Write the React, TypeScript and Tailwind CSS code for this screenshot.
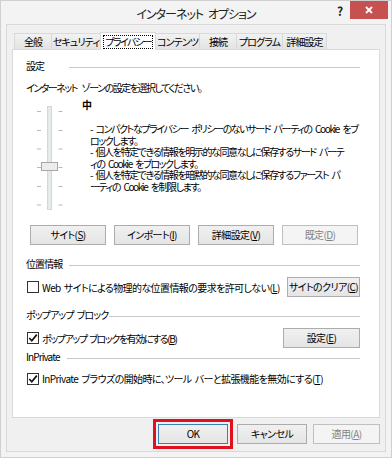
import React from 'react';

const FONT = "[font-family:'Noto_Sans_CJK_JP',sans-serif] [font-feature-settings:'palt'] [word-spacing:1.5px]";

// Win8 style push button
const Btn: React.FC<{ label: React.ReactNode; disabled?: boolean; w?: string; focus?: boolean }> = ({ label, disabled, w = 'w-[76px]', focus }) => (
  <div
    className={`${w} h-[20px] shrink-0 flex items-center justify-center text-[10px] leading-none tracking-[-0.6px] border ${
      disabled
        ? 'border-[#bfbfbf] bg-[#f4f4f4] text-[#838383]'
        : focus
          ? 'border-[#3c7fb1] bg-gradient-to-b from-[#f0f0f0] to-[#e5e5e5] text-black'
          : 'border-[#acacac] bg-gradient-to-b from-[#f0f0f0] to-[#e5e5e5] text-black'
    }`}
  >
    {label}
  </div>
);

const Key: React.FC<{ k: string }> = ({ k }) => <span className="underline underline-offset-1">{k}</span>;

const Header: React.FC<{ label: string; labelW?: string; gap?: string }> = ({ label, labelW, gap = 'ml-[2px]' }) => (
  <div className="flex items-center h-[14px]">
    <span className={`${labelW ?? ''} shrink-0 text-[10px] leading-none whitespace-nowrap`}>{label}</span>
    <div className={`flex-1 h-px bg-[#c8c8c8] mt-[2px] ${labelW ? '' : gap}`} />
  </div>
);

const Check: React.FC<{ checked?: boolean }> = ({ checked }) => (
  <div className="w-[12px] h-[12px] border border-[#333333] bg-white shrink-0 flex items-center justify-center">
    {checked && (
      <svg width="10" height="10" viewBox="0 0 10 10">
        <path d="M1.3 5 L3.8 7.8 L8.8 1.6" fill="none" stroke="#111" strokeWidth="1.7" />
      </svg>
    )}
  </div>
);

const Slider: React.FC = () => {
  const ticks = [110.5, 129.5, 148, 166.5, 185.5, 204];
  return (
    <svg width="30" height="106" viewBox="33 104 30 106">
      <rect x="46.5" y="105.5" width="4" height="103" fill="#e7eaea" stroke="#d6d6d6" />
      {ticks.map((y) => (
        <g key={y}>
          <line x1="36" x2="40" y1={y} y2={y} stroke="#b8b8b8" />
          <line x1="57.5" x2="61.5" y1={y} y2={y} stroke="#b8b8b8" />
        </g>
      ))}
      <rect x="40.5" y="161.5" width="16" height="8" fill="#ececec" stroke="#a8a8a8" />
    </svg>
  );
};

const tabs = ['全般', 'セキュリティ', 'プライバシー', 'コンテンツ', '接続', 'プログラム', '詳細設定'];
const tabW = ['w-[38px]', 'w-[50px]', 'w-[56px]', 'w-[45px]', 'w-[38px]', 'w-[47px]', 'w-[45px]'];

export default function App() {
  return (
    <div className={`${FONT} w-[392px] h-[458px] bg-[#f3f3f3] border border-[#d0d0d0] flex flex-col text-black overflow-hidden tracking-[-0.9px]`}>
      {/* Title bar */}
      <div className="relative h-[23px] shrink-0">
        <div className="text-center text-[12px] leading-[25px] text-[#222] tracking-[-1px] [word-spacing:3px]">インターネット オプション</div>
        <span className="absolute left-[336px] top-[1px] text-[12px] font-bold text-[#222]">?</span>
        <div className="absolute left-[349px] top-0 w-[38px] h-[18px] bg-[#c75050] flex items-center justify-center">
          <svg width="8" height="8" viewBox="0 0 8 8">
            <path d="M1 1 L7 7 M7 1 L1 7" stroke="white" strokeWidth="1.8" />
          </svg>
        </div>
      </div>

      {/* Client area */}
      <div className="mx-[5px] mb-[5px] flex-1 bg-[#f0f0f0] border border-[#d9d9d9] flex flex-col px-[5px] pt-[7px]">
        {/* Tabs */}
        <div className="flex items-end h-[17px] pl-[2px]">
          {tabs.map((t, i) =>
            i === 2 ? (
              <div key={t} className={`${tabW[i]} h-[18px] -mb-px -ml-px z-10 bg-white border border-[#d9d9d9] border-b-0 flex p-[2px] pb-[1px]`}>
                <span className="flex-1 flex items-center justify-center text-[10px] leading-none tracking-[-1.6px] outline-1 -outline-offset-1 outline-dotted outline-black">{t}</span>
              </div>
            ) : (
              <div key={t} className={`${tabW[i]} h-[16px] bg-gradient-to-b from-[#f2f2f2] to-[#e3e3e3] border border-[#d9d9d9] border-b-0 ${i === 0 ? '' : '-ml-px'} flex items-center justify-center text-[10px] leading-none`}>
                {t}
              </div>
            )
          )}
        </div>

        {/* Panel */}
        <div className="w-[368px] h-[369px] bg-white border border-[#d9d9d9] pl-[13px] pr-[19px] pt-[9px] flex flex-col text-[10px]">
          <Header label="設定" labelW="w-[43px]" />
          <div className="mt-[8px] leading-[14px] whitespace-nowrap tracking-[-1.5px] [word-spacing:4px]">インターネット ゾーンの設定を選択してください。</div>

          <div className="flex mt-[4px]">
            <div className="pl-[8px] pt-[6px]">
              <Slider />
            </div>
            <div className="ml-[26px] flex flex-col">
              <div className="font-bold leading-[12px] ml-[-8px]">中</div>
              <div className="mt-[12px] leading-[11.6px] whitespace-nowrap tracking-[-1.4px] [word-spacing:2.5px]">
                <div>- コンパクトなプライバシー ポリシーのないサード パーティの Cookie をブ</div>
                <div>ロックします。</div>
                <div>- 個人を特定できる情報を明示的な同意なしに保存するサード パーテ</div>
                <div>ィの Cookie をブロックします。</div>
                <div>- 個人を特定できる情報を暗黙的な同意なしに保存するファースト パ</div>
                <div>ーティの Cookie を制限します。</div>
              </div>
            </div>
          </div>

          <div className="flex gap-[8px] mt-[14px] ml-[4px]">
            <Btn label={<>サイト(<Key k="S" />)</>} />
            <Btn label={<>インポート(<Key k="I" />)</>} />
            <Btn label={<>詳細設定(<Key k="V" />)</>} />
            <Btn label={<>既定(<Key k="D" />)</>} disabled />
          </div>

          <div className="mt-[12px]">
            <Header label="位置情報" labelW="w-[43px]" />
          </div>
          <div className="flex items-center mt-[6px] ml-[1px]">
            <Check />
            <div className="ml-[3px] flex-1 min-w-0 whitespace-nowrap tracking-[-0.6px]">Web サイトによる物理的な位置情報の要求を許可しない(<Key k="L" />)</div>
            <Btn label={<>サイトのクリア(<Key k="C" />)</>} w="w-[73px]" />
          </div>

          <div className="mt-[11px]">
            <Header label="ポップアップ ブロック" gap="ml-[1px]" />
          </div>
          <div className="flex items-center mt-[6px] ml-[1px]">
            <Check checked />
            <div className="ml-[3px] flex-1 min-w-0 whitespace-nowrap tracking-[-1.4px]">ポップアップ ブロックを有効にする(<Key k="B" />)</div>
            <Btn label={<>設定(<Key k="E" />)</>} w="w-[77px]" />
          </div>

          <div className="mt-[2px]">
            <Header label="InPrivate" gap="ml-[7px]" />
          </div>
          <div className="flex items-center mt-[7px] ml-[1px]">
            <Check checked />
            <span className="ml-[3px] whitespace-nowrap tracking-[-0.6px]">InPrivate ブラウズの開始時に、ツール バーと拡張機能を無効にする(<Key k="T" />)</span>
          </div>
        </div>

        {/* Bottom buttons */}
        <div className="flex justify-end items-center mt-[6px]">
          <div className="border-[3px] border-[#e2101c] px-[2px] py-[2px] -my-[5px] mr-[4px]">
            <Btn label="OK" w="w-[70px]" focus />
          </div>
          <Btn label="キャンセル" w="w-[70px]" />
          <div className="w-[6px]" />
          <Btn label={<>適用(<Key k="A" />)</>} w="w-[67px]" disabled />
        </div>
      </div>
    </div>
  );
}
